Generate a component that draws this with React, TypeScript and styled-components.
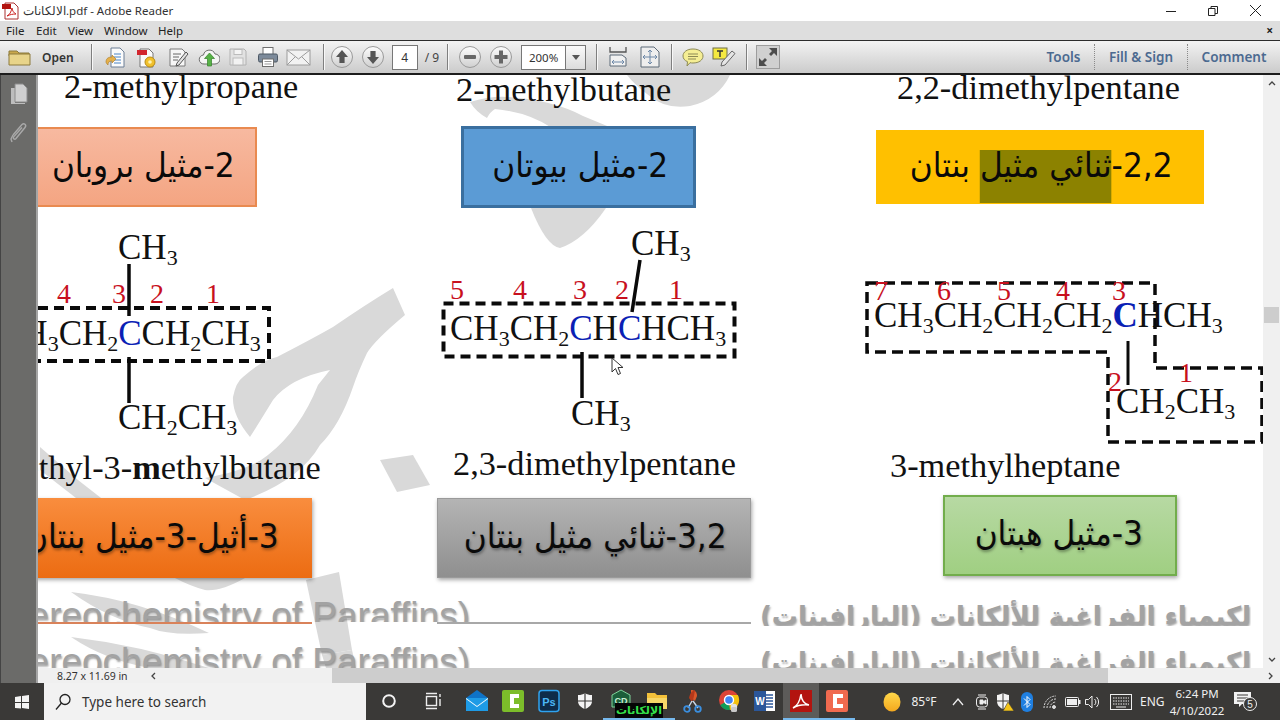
import React from 'react';
import styled, { createGlobalStyle } from 'styled-components';

const PAGE_X = 38;
const PAGE_Y = 75;

const GlobalStyle = createGlobalStyle`
  html, body { margin: 0; padding: 0; height: 100%; overflow: hidden; background: #fff; }
  * { box-sizing: border-box; }
`;

const Win = styled.div`
  width: 1280px;
  height: 720px;
  display: flex;
  flex-direction: column;
  font-family: "Noto Sans", "Liberation Sans", sans-serif;
  overflow: hidden;
`;

const TitleBar = styled.div`
  height: 21px;
  background: #fff;
  display: flex;
  align-items: center;
  padding-left: 2px;
  font-size: 11.5px;
  color: #333;
`;
const TitleText = styled.span`
  margin-left: 3px;
  white-space: nowrap;
`;
const WinControls = styled.div`
  margin-left: auto;
  margin-right: 4px;
  display: flex;
`;
const WinBtn = styled.div`
  width: 42px;
  height: 21px;
  display: flex;
  align-items: center;
  justify-content: center;
`;

const MenuBar = styled.div`
  height: 20px;
  background: #dedede;
  border-bottom: 1px solid #2c2c2c;
  display: flex;
  align-items: center;
  padding: 0 6px;
  gap: 11px;
  font-size: 11.5px;
  color: #222;
`;
const MenuItem = styled.span<{ $w?: number }>`
  width: ${p => p.$w}px;
`;
const MenuClose = styled.span`
  margin-left: auto;
  font-size: 12px;
  font-weight: 700;
  margin-right: 1px;
`;

const ToolBar = styled.div`
  height: 34px;
  background: linear-gradient(#f3f3f3, #cbcbcb);
  border-bottom: 2px solid #1d1d1d;
  display: flex;
  align-items: center;
  padding-left: 8px;
`;
const OpenLabel = styled.span`
  font-size: 12px;
  font-weight: 600;
  color: #333;
  margin-left: 10px;
  margin-right: 17px;
`;
const Sep = styled.div<{ $l?: number; $r?: number }>`
  width: 1px;
  height: 26px;
  background: #7f7f7f;
  box-shadow: 1px 0 0 #f8f8f8;
  margin-left: ${p => p.$l ?? 0}px;
  margin-right: ${p => p.$r ?? 0}px;
`;
const Tool = styled.div<{ $w?: number }>`
  width: ${p => p.$w ?? 30}px;
  height: 30px;
  display: flex;
  align-items: center;
  justify-content: center;
  flex: none;
`;
const PageInput = styled.div`
  width: 26px;
  height: 25px;
  background: #fff;
  border: 1px solid #777;
  font-size: 12px;
  color: #333;
  display: flex;
  align-items: center;
  justify-content: center;
  margin-left: 3px;
`;
const PageTotal = styled.span`
  font-size: 12px;
  color: #444;
  margin: 0 8px 0 7px;
  white-space: nowrap;
`;
const ZoomInput = styled.div`
  width: 45px;
  height: 25px;
  background: #fff;
  border: 1px solid #777;
  font-size: 11.5px;
  color: #333;
  display: flex;
  align-items: center;
  justify-content: center;
  margin-left: 5px;
`;
const ZoomDrop = styled.div`
  width: 20px;
  height: 25px;
  background: linear-gradient(#fafafa, #dcdcdc);
  border: 1px solid #777;
  border-left: 0;
  display: flex;
  align-items: center;
  justify-content: center;
  margin-right: 10px;
`;
const PaneTabs = styled.div`
  margin-left: auto;
  display: flex;
  align-items: center;
  height: 100%;
`;
const PaneTab = styled.div<{ $w: number; $line?: boolean }>`
  width: ${p => p.$w}px;
  height: 26px;
  font-size: 13.5px;
  font-weight: 600;
  color: #4c6a90;
  display: flex;
  align-items: center;
  justify-content: center;
  white-space: nowrap;
  border-right: ${p => (p.$line ? '1px dotted #8a8a8a' : '0')};
`;

const Main = styled.div`
  flex: 1;
  display: flex;
  min-height: 0;
`;
const NavPane = styled.div`
  width: 38px;
  background: #6b6b69;
  border-right: 2px solid #a5a5a5;
  border-left: 1px solid #444;
  display: flex;
  flex-direction: column;
  align-items: center;
  padding-top: 8px;
  gap: 16px;
`;
const DocColumn = styled.div`
  flex: 1;
  display: flex;
  flex-direction: column;
  min-width: 0;
`;
const DocRow = styled.div`
  flex: 1;
  display: flex;
  min-height: 0;
`;
const PageCanvas = styled.div`
  position: relative;
  flex: 1;
  overflow: hidden;
  background: #fff;
`;
const VScroll = styled.div`
  width: 17px;
  background: #f0f0f0;
  display: flex;
  flex-direction: column;
  align-items: center;
  justify-content: space-between;
  padding: 4px 0;
  position: relative;
`;
const VThumb = styled.div`
  position: absolute;
  left: 1px;
  top: 232px;
  width: 15px;
  height: 16px;
  background: #cdcdcd;
`;
const StatusBar = styled.div`
  height: 15px;
  display: flex;
  align-items: center;
  background: #f0f0f0;
  font-size: 10.5px;
  color: #333;
`;
const PageSize = styled.div`
  width: 106px;
  padding-left: 19px;
  white-space: nowrap;
  flex: none;
`;
const HArrow = styled.div`
  width: 20px;
  height: 15px;
  display: flex;
  align-items: center;
  justify-content: center;
  flex: none;
`;
const HTrack = styled.div`
  flex: 1;
  height: 15px;
  display: flex;
`;
const HThumb = styled.div`
  margin-left: 168px;
  width: 776px;
  height: 15px;
  background: #cdcdcd;
`;

const TaskBar = styled.div`
  height: 37px;
  background: #3a3937;
  display: flex;
  align-items: center;
  position: relative;
  color: #f0f0f0;
  font-size: 12px;
`;
const StartBtn = styled.div`
  width: 44px;
  height: 37px;
  flex: none;
  display: flex;
  align-items: center;
  justify-content: center;
`;
const SearchBox = styled.div`
  width: 322px;
  height: 37px;
  flex: none;
  background: #f2f2f2;
  display: flex;
  align-items: center;
  padding-left: 11px;
  gap: 11px;
  font-size: 13.5px;
  color: #333;
`;
const TaskSlot = styled.div<{ $w?: number; $active?: boolean; $open?: boolean }>`
  position: relative;
  width: ${p => p.$w ?? 36}px;
  height: 37px;
  display: flex;
  align-items: center;
  justify-content: center;
  flex: none;
  background: ${p => (p.$active ? '#5c5b59' : 'transparent')};
  border-bottom: 2px solid ${p => (p.$active || p.$open ? '#76b9ed' : 'transparent')};
`;
const RunLabel = styled.div`
  position: absolute;
  left: 615px;
  top: 20px;
  width: 48px;
  height: 15px;
  background: #050505;
  color: #35e04a;
  font-size: 11px;
  font-weight: 700;
  line-height: 15px;
  text-align: center;
  white-space: nowrap;
  font-family: "DejaVu Sans", sans-serif;
`;
const Tray = styled.div`
  margin-left: 27px;
  display: flex;
  align-items: center;
  height: 37px;
  flex: none;
`;
const TrayText = styled.span<{ $w: number }>`
  width: ${p => p.$w}px;
  text-align: center;
  white-space: nowrap;
  font-size: 12px;
  flex: none;
`;
const TrayIcon = styled.div<{ $w?: number }>`
  width: ${p => p.$w ?? 23}px;
  display: flex;
  align-items: center;
  justify-content: center;
  flex: none;
`;
const Clock = styled.div`
  width: 66px;
  flex: none;
  text-align: center;
  font-size: 11.5px;
  line-height: 17px;
`;
const NotifyIcon = styled.div`
  margin-left: 1px;
  position: relative;
  display: flex;
`;

/* page content: a PDF page is a free canvas, things sit where the author dropped them */
const Layer = styled.svg`
  position: absolute;
  left: 0;
  top: 0;
  width: 1225px;
  height: 593px;
`;
const serif = `"Liberation Serif", "Times New Roman", serif`;
const Heading = styled.div<{ $x: number; $y: number }>`
  position: absolute;
  left: ${p => p.$x - PAGE_X}px;
  top: ${p => p.$y - PAGE_Y - 13}px;
  font-family: ${serif};
  font-size: 34.3px;
  line-height: 24px;
  color: #111;
  white-space: nowrap;
`;
const Formula = styled.div<{ $x: number; $y: number }>`
  position: absolute;
  left: ${p => p.$x - PAGE_X}px;
  top: ${p => p.$y - PAGE_Y - 20}px;
  font-family: ${serif};
  font-size: 35px;
  line-height: 40px;
  color: #111;
  white-space: nowrap;
  sub {
    font-size: 22px;
    line-height: 0;
    vertical-align: -6px;
  }
`;
const BlueC = styled.span<{ $bold?: boolean }>`
  color: #0b1fb5;
  font-weight: ${p => (p.$bold ? 700 : 400)};
`;
const Num = styled.div<{ $x: number; $y: number }>`
  position: absolute;
  left: ${p => p.$x - PAGE_X}px;
  top: ${p => p.$y - PAGE_Y - 15}px;
  font-family: ${serif};
  font-size: 28px;
  line-height: 30px;
  color: #c8101e;
`;
const NameBox = styled.div<{
  $x: number; $y: number; $w: number; $h: number; $bg: string; $border: string; $pad: number; $shadow?: boolean;
}>`
  position: absolute;
  left: ${p => p.$x - PAGE_X}px;
  top: ${p => p.$y - PAGE_Y}px;
  width: ${p => p.$w}px;
  height: ${p => p.$h}px;
  background: ${p => p.$bg};
  border: ${p => p.$border};
  box-shadow: ${p => (p.$shadow ? '1px 2px 4px rgba(0,0,0,.35)' : 'none')};
  display: flex;
  align-items: center;
  justify-content: flex-start;
  padding-right: ${p => p.$pad}px;
  padding-bottom: 5px;
  direction: rtl;
  overflow: hidden;
  font-family: "DejaVu Sans", "Liberation Sans", sans-serif;
  font-size: 34px;
  color: #0a0a0a;
  white-space: nowrap;
  text-shadow: ${p => (p.$shadow ? '1px 2px 3px rgba(0,0,0,.35)' : 'none')};
`;
/* DejaVu is the only installed Arabic face and runs wider than the Arial of the original */
const NameText = styled.span`
  flex: none;
  display: inline-block;
  transform: scaleX(0.92);
  transform-origin: right center;
`;
const Marked = styled.span`
  background: linear-gradient(transparent 5px, #8c8200 5px);
  padding-bottom: 18px;
`;
const Strip = styled.div<{ $x: number; $y: number; $w: number; $h: number; $rtl?: boolean }>`
  position: absolute;
  left: ${p => p.$x - PAGE_X}px;
  top: ${p => p.$y - PAGE_Y}px;
  width: ${p => p.$w}px;
  height: ${p => p.$h}px;
  overflow: hidden;
  display: flex;
  justify-content: ${p => (p.$rtl ? 'flex-start' : 'flex-end')};
  direction: ${p => (p.$rtl ? 'rtl' : 'ltr')};
  white-space: nowrap;
  font-family: ${p => (p.$rtl ? '"DejaVu Sans", sans-serif' : '"Liberation Sans", sans-serif')};
  font-size: ${p => (p.$rtl ? 26 : 37)}px;
  font-weight: ${p => (p.$rtl ? 700 : 400)};
  line-height: 40px;
  color: #a3a3a3;
  text-shadow: 1px 2px 2px rgba(90, 90, 90, .55);
`;
const Rule = styled.div<{ $x: number; $w: number; $c: string }>`
  position: absolute;
  left: ${p => p.$x - PAGE_X}px;
  top: ${622 - PAGE_Y}px;
  width: ${p => p.$w}px;
  height: 2px;
  background: ${p => p.$c};
`;
const Cursor = styled.svg`
  position: absolute;
  left: ${611 - PAGE_X}px;
  top: ${357 - PAGE_Y}px;
`;

const Svg: React.FC<{ s?: number; w?: number; h?: number; children: React.ReactNode }> = ({ s = 22, w, h, children }) => (
  <svg width={w ?? s} height={h ?? s} viewBox={`0 0 ${w ?? s} ${h ?? s}`} style={{ display: 'block' }}>
    {children}
  </svg>
);

const CircleBtn: React.FC<{ kind: 'up' | 'down' | 'minus' | 'plus' }> = ({ kind }) => (
  <Svg s={24}>
    <defs>
      <linearGradient id="cb" x1="0" y1="0" x2="0" y2="1">
        <stop offset="0" stopColor="#fdfdfd" />
        <stop offset="1" stopColor="#cfcfcf" />
      </linearGradient>
    </defs>
    <circle cx="12" cy="12" r="10.5" fill="url(#cb)" stroke="#9a9a9a" />
    {kind === 'up' && <path d="M12 5l6 7h-3.4v6H9.4v-6H6z" fill="#555" />}
    {kind === 'down' && <path d="M12 19l-6-7h3.4V6h5.2v6H18z" fill="#555" />}
    {kind === 'minus' && <rect x="6" y="10" width="12" height="4" rx="1" fill="#666" />}
    {kind === 'plus' && <path d="M10 5.5h4V10h4.5v4H14v4.5h-4V14H5.5v-4H10z" fill="#666" />}
  </Svg>
);

const DocBase: React.FC = () => (
  <path d="M6 2h9l4 4v15H6z" fill="#fbfbfb" stroke="#6d7f96" />
);

const ToolIcons = {
  folder: (
    <Svg s={24}>
      <path d="M1 6h8l2 2h10v3H1z" fill="#c9a84c" stroke="#8d7a3c" />
      <path d="M1 20V9h21v11z" fill="#e8d48a" stroke="#8d7a3c" />
    </Svg>
  ),
  create: (
    <Svg>
      <DocBase />
      <path d="M9 8h7M9 11h7M9 14h7M9 17h7" stroke="#4a84c4" />
      <path d="M1 16c0-4 3-5 6-5v-2l4 4-4 4v-2c-3 0-4 1-4 4-1-1-2-2-2-3z" fill="#e5b04a" stroke="#a97b26" strokeWidth=".6" />
    </Svg>
  ),
  combine: (
    <Svg>
      <path d="M5 3h9l4 4v14H5z" fill="#fafafa" stroke="#777" />
      <rect x="2" y="4" width="10" height="5" fill="#d2262e" />
      <circle cx="15" cy="16" r="5" fill="#f0c02c" stroke="#b98b12" />
      <circle cx="15" cy="16" r="1.8" fill="#fff2b0" />
    </Svg>
  ),
  sign: (
    <Svg>
      <path d="M3 3h12l3 3v14H3z" fill="#f7f7f7" stroke="#7b7b7b" />
      <path d="M6 8h8M6 11h6M6 14h5" stroke="#666" />
      <path d="M10 17l9-11 2 2-9 11-3 1z" fill="#e3e3e3" stroke="#555" />
    </Svg>
  ),
  cloud: (
    <Svg>
      <path d="M6 18a4.500 4.500 0 0 1-.5-9A6 6 0 0 1 17 8a5 5 0 0 1 0 10z" fill="#f5f5f5" stroke="#6f6f6f" />
      <path d="M11.500 7l5 5.500h-3V20h-4v-7.500h-3z" fill="#57b247" stroke="#33802a" strokeWidth=".7" />
    </Svg>
  ),
  save: (
    <Svg>
      <path d="M3 3h14l2 2v14H3z" fill="#e2e2e2" stroke="#b2b2b2" />
      <rect x="7" y="3.500" width="8" height="5" fill="#f4f4f4" stroke="#bbb" />
      <rect x="6" y="12" width="10" height="7" fill="#f2f2f2" stroke="#bbb" />
    </Svg>
  ),
  print: (
    <Svg>
      <rect x="6" y="1.500" width="10" height="7" fill="#fff" stroke="#6e6e6e" />
      <rect x="1.500" y="8" width="19" height="8" rx="1.500" fill="#7c8a9a" stroke="#4d5865" />
      <rect x="5.500" y="13" width="11" height="7.500" fill="#fff" stroke="#6e6e6e" />
      <path d="M7.500 15.500h7M7.500 18h7" stroke="#999" />
    </Svg>
  ),
  mail: (
    <Svg w={25} h={22}>
      <rect x="1" y="4" width="23" height="15" fill="#f2f2f2" stroke="#9c9c9c" />
      <path d="M1 4l11.500 9L24 4M1 19l8-8M24 19l-8-8" fill="none" stroke="#9c9c9c" />
    </Svg>
  ),
  fitWidth: (
    <Svg>
      <path d="M3 1v5h16V1" fill="none" stroke="#555" strokeWidth="1.300" />
      <path d="M3 9h12l4 3v8H3z" fill="#f1f1f1" stroke="#5d6a78" />
      <path d="M5 16h12M5 16l2-2M5 16l2 2M17 16l-2-2M17 16l-2 2" stroke="#6c88a8" fill="none" />
    </Svg>
  ),
  fitPage: (
    <Svg>
      <path d="M2 1h13l5 5v15H2z" fill="#eee" stroke="#5d6a78" />
      <path d="M11 4v14M4 11h14M11 4l-2 2M11 4l2 2M11 18l-2-2M11 18l2-2M4 11l2-2M4 11l2 2M18 11l-2-2M18 11l-2 2" stroke="#6c88a8" fill="none" />
    </Svg>
  ),
  comment: (
    <Svg w={24} h={22}>
      <path d="M12 3c6 0 10 3 10 7s-4 7-10 7c-1 0-2 0-3-.3L6 20l.5-4.300C3.500 14.500 2 12.500 2 10c0-4 4-7 10-7z" fill="#f5ee94" stroke="#8d8a55" />
      <path d="M7 8h10M7 10.500h10M7 13h8" stroke="#8d8a55" />
    </Svg>
  ),
  highlight: (
    <Svg w={24} h={22}>
      <rect x="1" y="2" width="14" height="11" fill="#f5e941" stroke="#6f6f4a" />
      <path d="M5 5h6M8 5v6" stroke="#333" strokeWidth="1.400" />
      <path d="M9 20l1-4L20 5l3 2.500L13 19z" fill="#e6e6e6" stroke="#666" />
    </Svg>
  ),
  expand: (
    <Svg s={24}>
      <rect x=".5" y=".5" width="23" height="23" fill="#d0d0d0" stroke="#9d9d9d" />
      <path d="M21 3v8l-3-3-3 3-2-2 3-3-3-3zM3 21v-8l3 3 3-3 2 2-3 3 3 3z" fill="#4d4d4d" />
    </Svg>
  ),
};

const TaskIcons = {
  start: (
    <Svg s={16}>
      <path d="M1 3l6-1v6H1zM8 2l7-1v7H8zM1 9h6v5.500L1 14zM8 9h7v6l-7-1z" fill="#f4f4f4" />
    </Svg>
  ),
  search: (
    <svg width="16" height="18" viewBox="0 0 16 18" fill="none" stroke="#222" strokeWidth="1.300">
      <circle cx="10" cy="6.500" r="5" />
      <path d="M6.500 10L1 16.500" />
    </svg>
  ),
  cortana: (
    <Svg s={16}>
      <circle cx="8" cy="8" r="5.800" fill="none" stroke="#f4f4f4" strokeWidth="2" />
    </Svg>
  ),
  taskview: (
    <Svg s={18}>
      <path d="M2 1.500h11M2 16.500h11M16 2v3M16 7v7" stroke="#eee" strokeWidth="1.400" />
      <rect x="2.500" y="4.500" width="10" height="9" fill="none" stroke="#eee" strokeWidth="1.400" />
    </Svg>
  ),
  mail: (
    <Svg s={24}>
      <path d="M12 1l11 8H1z" fill="#0f73c7" />
      <rect x="1" y="9" width="22" height="13" fill="#1e9be6" />
      <path d="M1 9l11 8 11-8v1l-11 8L1 10z" fill="#fff" />
    </Svg>
  ),
  camGreen: (
    <Svg s={24}>
      <rect x="1" y="1" width="22" height="22" rx="2" fill="#7cbd2a" />
      <path d="M9 5h9v4h-5v6h5v4H9z" fill="#fff" />
    </Svg>
  ),
  ps: (
    <svg width="22" height="24" viewBox="0 0 22 24">
      <rect x="1" y="1.500" width="20" height="21" rx="3" fill="#0e2c4a" stroke="#2fa3f0" strokeWidth="1.500" />
      <text x="11" y="16.500" fontSize="11" fontWeight="700" fill="#4bb6f5" textAnchor="middle" fontFamily="Liberation Sans, sans-serif">Ps</text>
    </svg>
  ),
  shield: (
    <Svg s={18}>
      <path d="M9 1c2 1.500 4 2 7 2v6c0 4-3 6.500-7 8-4-1.500-7-4-7-8V3c3 0 5-.5 7-2z" fill="#f4f4f4" />
      <path d="M9 1v16M2 9h14" stroke="#3a3937" strokeWidth="1.200" />
    </Svg>
  ),
  cd: (
    <svg width="24" height="24" viewBox="0 0 24 24">
      <path d="M12 1l9 5v12H3V6z" fill="#1c5e3a" stroke="#7fd39a" />
      <text x="12" y="15" fontSize="9" fontWeight="700" fill="#c8f0d4" textAnchor="middle" fontFamily="Liberation Sans, sans-serif">CD</text>
    </svg>
  ),
  folder: (
    <Svg s={24}>
      <path d="M2 4h8l2 2h10v14H2z" fill="#f3c13a" />
      <rect x="2" y="9" width="20" height="11" fill="#f7d768" />
    </Svg>
  ),
  snip: (
    <Svg s={24}>
      <path d="M10 1c4 0 6 2 6 6l-2 5-4-3z" fill="#d9582b" />
      <path d="M8 9c1-5 3-7 6-8-1 5-1 8-3 12z" fill="#b5381a" />
      <path d="M12 12l5 7M11 12l-4 7" stroke="#c9d5e3" strokeWidth="1.400" />
      <circle cx="6" cy="20" r="2.800" fill="none" stroke="#3a8fe0" strokeWidth="1.800" />
      <circle cx="17" cy="20" r="2.800" fill="none" stroke="#3a8fe0" strokeWidth="1.800" />
    </Svg>
  ),
  chrome: (
    <Svg s={24}>
      <circle cx="12" cy="11" r="10" fill="#db4437" />
      <path d="M12 11L3.300 16A10 10 0 0 0 13 21z" fill="#0f9d58" />
      <path d="M12 6h8.800A10 10 0 0 1 13 21l-1-10z" fill="#f4c20d" />
      <circle cx="12" cy="11" r="4.500" fill="#4285f4" stroke="#fff" strokeWidth="1.400" />
      <circle cx="17" cy="18" r="3.200" fill="#e3e3e3" />
      <rect x="14" y="18" width="6" height="5" rx="1.500" fill="#c9c9c9" />
    </Svg>
  ),
  word: (
    <svg width="22" height="24" viewBox="0 0 22 24">
      <rect x="7" y="2" width="14" height="20" fill="#fff" />
      <path d="M10 6h9M10 9h9M10 12h9M10 15h9M10 18h9" stroke="#2b579a" strokeWidth="1.400" />
      <rect x="0" y="2" width="12" height="20" fill="#2b579a" />
      <text x="6" y="16" fontSize="10" fontWeight="700" fill="#fff" textAnchor="middle" fontFamily="Liberation Sans, sans-serif">W</text>
    </svg>
  ),
  acrobat: (
    <Svg s={24}>
      <rect x="1" y="1" width="22" height="22" fill="#b3140f" />
      <path d="M4 19c4-2 7-7 8-14 .5 7 3 10 8 11-5-.5-11 0-16 3z" fill="none" stroke="#fff" strokeWidth="1.500" />
    </Svg>
  ),
  camRed: (
    <Svg s={24}>
      <rect x="1" y="1" width="22" height="22" rx="2" fill="#f06a4f" />
      <path d="M8 5h10v4h-6v6h6v4H8z" fill="#fff" />
    </Svg>
  ),
  sun: (
    <Svg s={20}>
      <defs>
        <linearGradient id="sun" x1="0" y1="0" x2="0" y2="1">
          <stop offset="0" stopColor="#ffd84a" />
          <stop offset="1" stopColor="#f4a81e" />
        </linearGradient>
      </defs>
      <ellipse cx="10" cy="10" rx="8.500" ry="9.500" fill="url(#sun)" />
    </Svg>
  ),
  caret: (
    <svg width="14" height="10" viewBox="0 0 14 10" fill="none" stroke="#eee" strokeWidth="1.300">
      <path d="M2 8l5-6 5 6" />
    </svg>
  ),
  meet: (
    <svg width="14" height="20" viewBox="0 0 14 20" fill="none" stroke="#eee">
      <path d="M3 3h8M3 17h8" />
      <rect x="1.500" y="5" width="11" height="10" rx="3" />
      <path d="M5 8h3v4H5zM8 10l3-2v4z" fill="#eee" />
    </svg>
  ),
  defender: (
    <Svg s={20}>
      <path d="M8 1c2 1 4 1.800 6 2v6c0 4-2.500 6.500-6 8-3.500-1.500-6-4-6-8V3c2-.2 4-1 6-2z" fill="#f4f4f4" />
      <path d="M8 1v16M2 9h12" stroke="#3a3937" />
      <path d="M13 10l6 9H8z" fill="#f5c518" stroke="#3a3937" strokeWidth=".6" />
    </Svg>
  ),
  bluetooth: (
    <svg width="12" height="20" viewBox="0 0 12 20">
      <rect width="12" height="20" rx="6" fill="#1f7fe0" />
      <path d="M3 6.500l6 6-3 3v-11l3 3-6 6" fill="none" stroke="#fff" />
    </svg>
  ),
  wifi: (
    <svg width="16" height="16" viewBox="0 0 16 16" fill="none" stroke="#ddd">
      <path d="M2 14a12 12 0 0 1 12-12M5 14a9 9 0 0 1 9-9M8 14a6 6 0 0 1 6-6" strokeDasharray="2 1" />
      <circle cx="12" cy="13" r="1.500" fill="#ddd" />
    </svg>
  ),
  battery: (
    <svg width="16" height="12" viewBox="0 0 16 12">
      <rect x=".5" y="1.500" width="13" height="9" rx="1" fill="none" stroke="#eee" />
      <rect x="2" y="3" width="10" height="6" fill="#eee" />
      <rect x="14" y="4" width="1.500" height="4" fill="#eee" />
    </svg>
  ),
  speaker: (
    <svg width="18" height="16" viewBox="0 0 18 16" fill="none" stroke="#eee">
      <path d="M1.500 5.500h3L8 2v12l-3.500-3.500h-3z" />
      <path d="M10.500 5a4 4 0 0 1 0 6M12.500 3a7 7 0 0 1 0 10" />
    </svg>
  ),
  keyboard: (
    <svg width="22" height="16" viewBox="0 0 22 16" fill="none" stroke="#eee">
      <rect x=".5" y=".5" width="21" height="15" />
      <path d="M3 4h16M3 7h16M3 10h16" strokeDasharray="1.500 1" />
      <path d="M6 13h10" />
    </svg>
  ),
  notify: (
    <svg width="30" height="26" viewBox="0 0 30 26">
      <path d="M3 3h17v12h-9l-3 3v-3H3z" fill="#f2f2f2" />
      <path d="M6 6h11M6 9h11M6 12h8" stroke="#3a3937" />
      <circle cx="19" cy="15" r="6.500" fill="#3a3937" stroke="#eee" />
      <text x="19" y="18.500" fontSize="10" fill="#eee" textAnchor="middle" fontFamily="Liberation Sans, sans-serif">5</text>
    </svg>
  ),
};

const Chevron: React.FC<{ dir: 'up' | 'down' | 'left' | 'right' }> = ({ dir }) => {
  const d = { up: 'M2 6l3-3 3 3', down: 'M2 4l3 3 3-3', left: 'M6 2L3 5l3 3', right: 'M4 2l3 3-3 3' }[dir];
  return (
    <svg width="10" height="10" viewBox="0 0 10 10" fill="none" stroke="#444" strokeWidth="1.300" style={{ display: 'block' }}>
      <path d={d} />
    </svg>
  );
};

const Watermark: React.FC = () => (
  <Layer viewBox={`${PAGE_X} ${PAGE_Y} 1225 593`}>
    <g fill="#d9d9d9">
      <path d="M627 75H730Q718 100 690 106Q665 110 647 94Q634 84 627 75Z" />
      <path d="M470 102Q490 96 507 97Q553 100 583 116L612 128H552Q528 112 495 109Q490 112 487 118Q476 112 470 102Z" />
      <path d="M531 208H606Q584 240 560 248Q546 246 531 208Z" />
      <path d="M393 288L405 315Q375 340 367 353Q358 372 353 387Q340 425 320 445Q300 480 245 500L205 478Q250 470 268 455Q300 430 318 385Q330 370 330 370Q290 378 273 400Q262 418 250 437Q232 415 233 397Q236 382 243 377Q262 360 277 357Q310 340 333 327Q365 305 393 288Z" />
      <path d="M380 460L413 455L430 485L397 492Z" />
      <path d="M40 447L78 480L110 505L85 505L40 470Z" />
      <path d="M175 578H245Q220 592 205 590Q190 586 175 578Z" />
      <path d="M306 580L339 572L352 650L322 655Z" />
      <path d="M71 592Q140 600 209 633Q170 636 150 628Q110 620 71 592Z" />
      <path d="M71 637Q140 645 209 668H150Q105 660 71 637Z" />
      <path d="M322 655L352 650L356 668H326Z" />
    </g>
  </Layer>
);

const Bonds: React.FC = () => (
  <Layer viewBox={`${PAGE_X} ${PAGE_Y} 1225 593`}>
    <g fill="none" stroke="#0a0a0a">
      <path d="M38 308H269V361H38" strokeWidth="4" strokeDasharray="10 6" />
      <path d="M129 264V316M129 357V403" strokeWidth="3.500" />
      <rect x="443.500" y="303.500" width="291" height="53" strokeWidth="4" strokeDasharray="10 6" />
      <path d="M640 260L632 312M582 352V398" strokeWidth="3.500" />
      <path d="M867 283H1155V368H1262V442H1108V352H867Z" strokeWidth="3.500" strokeDasharray="11 6" />
      <path d="M1128 341V385" strokeWidth="3" />
    </g>
  </Layer>
);

const App: React.FC = () => (
  <Win>
    <GlobalStyle />
    <TitleBar>
      <svg width="18" height="18" viewBox="0 0 18 18" style={{ display: 'block' }}>
        <path d="M3 1h9l4 4v12H3z" fill="#fff" stroke="#a33" />
        <rect x="0" y="2" width="9" height="5" fill="#b3140f" />
        <path d="M5 14c3-1.500 4-4 5-8 .3 3 2 5 4 6-3 0-6 .5-9 2z" fill="none" stroke="#c22" />
      </svg>
      <TitleText>الالكانات.pdf - Adobe Reader</TitleText>
      <WinControls>
        <WinBtn>
          <svg width="12" height="12" stroke="#222"><path d="M1 6.500h10" /></svg>
        </WinBtn>
        <WinBtn>
          <svg width="12" height="12" fill="none" stroke="#222"><path d="M1.500 3.500h6.500v7H1.500zM4 3.500V1.500h6.500v7H8" /></svg>
        </WinBtn>
        <WinBtn>
          <svg width="13" height="13" stroke="#222"><path d="M1 1l11 11M12 1L1 12" /></svg>
        </WinBtn>
      </WinControls>
    </TitleBar>
    <MenuBar>
      <MenuItem $w={19}>File</MenuItem>
      <MenuItem $w={21}>Edit</MenuItem>
      <MenuItem $w={25}>View</MenuItem>
      <MenuItem $w={43}>Window</MenuItem>
      <MenuItem $w={26}>Help</MenuItem>
      <MenuClose>×</MenuClose>
    </MenuBar>
    <ToolBar>
      {ToolIcons.folder}
      <OpenLabel>Open</OpenLabel>
      <Sep $r={9} />
      <Tool>{ToolIcons.create}</Tool>
      <Tool>{ToolIcons.combine}</Tool>
      <Tool $w={34}>{ToolIcons.sign}</Tool>
      <Tool $w={28}>{ToolIcons.cloud}</Tool>
      <Tool>{ToolIcons.save}</Tool>
      <Tool>{ToolIcons.print}</Tool>
      <Tool $w={32}>{ToolIcons.mail}</Tool>
      <Sep $l={8} $r={3} />
      <Tool $w={31}><CircleBtn kind="up" /></Tool>
      <Tool $w={31}><CircleBtn kind="down" /></Tool>
      <PageInput>4</PageInput>
      <PageTotal>/ 9</PageTotal>
      <Sep $r={6} />
      <Tool $w={31}><CircleBtn kind="minus" /></Tool>
      <Tool $w={31}><CircleBtn kind="plus" /></Tool>
      <ZoomInput>200%</ZoomInput>
      <ZoomDrop>
        <svg width="8" height="5"><path d="M0 0h8L4 5z" fill="#555" /></svg>
      </ZoomDrop>
      <Sep $r={6} />
      <Tool>{ToolIcons.fitWidth}</Tool>
      <Tool $w={34}>{ToolIcons.fitPage}</Tool>
      <Sep $l={4} $r={6} />
      <Tool>{ToolIcons.comment}</Tool>
      <Tool $w={32}>{ToolIcons.highlight}</Tool>
      <Sep $l={6} $r={6} />
      <Tool $w={30}>{ToolIcons.expand}</Tool>
      <PaneTabs>
        <PaneTab $w={62} $line>Tools</PaneTab>
        <PaneTab $w={93} $line>Fill &amp; Sign</PaneTab>
        <PaneTab $w={92}>Comment</PaneTab>
      </PaneTabs>
    </ToolBar>
    <Main>
      <NavPane>
        <svg width="20" height="22" viewBox="0 0 20 22">
          <path d="M2 5h4v15h10v1H2z" fill="#bdbdbd" />
          <path d="M6 1h8l4 4v14H6z" fill="#cfcfcf" stroke="#8c8c8c" />
        </svg>
        <svg width="20" height="24" viewBox="0 0 20 24" fill="none" stroke="#a9a9a9" strokeWidth="1.400">
          <path d="M4 14L13 3.500c2-2 5 .5 3 3L7 17.500c-1.300 1.500-3.500 0-2.300-1.600L13 6.500" />
          <path d="M3 21l-1-3 2-4" />
        </svg>
      </NavPane>
      <DocColumn>
        <DocRow>
          <PageCanvas>
            <Watermark />

            <Heading $x={64} $y={87}>2-methylpropane</Heading>
            <Heading $x={456} $y={90}>2-methylbutane</Heading>
            <Heading $x={897} $y={88}>2,2-dimethylpentane</Heading>

            <NameBox $x={30} $y={127} $w={227} $h={80} $pad={20} $bg="linear-gradient(#f7b9a0, #f4a582)" $border="2px solid #e98a50">
              <NameText>2-مثيل بروبان</NameText>
            </NameBox>
            <NameBox $x={461} $y={126} $w={235} $h={82} $pad={25} $bg="#5b9bd5" $border="3px solid #3a6f9f">
              <NameText>2-مثيل بيوتان</NameText>
            </NameBox>
            <NameBox $x={876} $y={130} $w={328} $h={74} $pad={31} $bg="#ffc000" $border="0">
              <NameText>2,2-<Marked>ثنائي مثيل</Marked> بنتان</NameText>
            </NameBox>

            <Bonds />

            <Formula $x={118} $y={248}>CH<sub>3</sub></Formula>
            <Formula $x={-1} $y={334}>CH<sub>3</sub>CH<sub>2</sub><BlueC>C</BlueC>CH<sub>2</sub>CH<sub>3</sub></Formula>
            <Formula $x={118} $y={418}>CH<sub>2</sub>CH<sub>3</sub></Formula>
            <Num $x={57} $y={294}>4</Num>
            <Num $x={112} $y={294}>3</Num>
            <Num $x={150} $y={294}>2</Num>
            <Num $x={206} $y={294}>1</Num>

            <Formula $x={631} $y={244}>CH<sub>3</sub></Formula>
            <Formula $x={450} $y={329}>CH<sub>3</sub>CH<sub>2</sub><BlueC>C</BlueC>H<BlueC>C</BlueC>HCH<sub>3</sub></Formula>
            <Formula $x={571} $y={414}>CH<sub>3</sub></Formula>
            <Num $x={450} $y={290}>5</Num>
            <Num $x={513} $y={290}>4</Num>
            <Num $x={573} $y={290}>3</Num>
            <Num $x={615} $y={290}>2</Num>
            <Num $x={669} $y={290}>1</Num>

            <Formula $x={874} $y={316}>CH<sub>3</sub>CH<sub>2</sub>CH<sub>2</sub>CH<sub>2</sub><BlueC $bold>C</BlueC>HCH<sub>3</sub></Formula>
            <Formula $x={1116} $y={402}>CH<sub>2</sub>CH<sub>3</sub></Formula>
            <Num $x={874} $y={291}>7</Num>
            <Num $x={937} $y={291}>6</Num>
            <Num $x={997} $y={291}>5</Num>
            <Num $x={1056} $y={291}>4</Num>
            <Num $x={1112} $y={291}>3</Num>
            <Num $x={1108} $y={382}>2</Num>
            <Num $x={1179} $y={373}>1</Num>

            <Heading $x={-5} $y={468}>3-ethyl-3-<b>m</b>ethylbutane</Heading>
            <Heading $x={453} $y={464}>2,3-dimethylpentane</Heading>
            <Heading $x={890} $y={466}>3-methylheptane</Heading>

            <NameBox $x={30} $y={498} $w={282} $h={80} $pad={33} $shadow $bg="linear-gradient(#f98d3e, #ec6c12)" $border="0">
              <NameText>3-أثيل-3-مثيل بنتان</NameText>
            </NameBox>
            <NameBox $x={437} $y={498} $w={314} $h={80} $pad={23} $shadow $bg="linear-gradient(#b4b4b4, #8f8f8f)" $border="1px solid #9a9a9a">
              <NameText>3,2-ثنائي مثيل بنتان</NameText>
            </NameBox>
            <NameBox $x={943} $y={495} $w={234} $h={81} $pad={32} $shadow $bg="linear-gradient(#b7d9a3, #a0cf82)" $border="2px solid #72ad4c">
              <NameText>3-مثيل هبتان</NameText>
            </NameBox>

            <Strip $x={38} $y={596} $w={432} $h={26}>Stereochemistry of Paraffins)</Strip>
            <Strip $x={38} $y={642} $w={432} $h={26}>Stereochemistry of Paraffins)</Strip>
            <Strip $x={745} $y={596} $w={506} $h={30} $rtl>لكيمياء الفراغية للألكانات (البارافينات)</Strip>
            <Strip $x={745} $y={642} $w={506} $h={26} $rtl>لكيمياء الفراغية للألكانات (البارافينات)</Strip>
            <Rule $x={38} $w={274} $c="#d9825a" />
            <Rule $x={437} $w={314} $c="#a8a8a8" />

            <Cursor width="13" height="20" viewBox="0 0 13 20">
              <path d="M1 1v14l3.500-3.500 2.500 6 2.500-1-2.500-6H12z" fill="#fff" stroke="#333" />
            </Cursor>
          </PageCanvas>
          <VScroll>
            <Chevron dir="up" />
            <VThumb />
            <Chevron dir="down" />
          </VScroll>
        </DocRow>
        <StatusBar>
          <PageSize>8.27 x 11.69 in</PageSize>
          <HArrow><Chevron dir="left" /></HArrow>
          <HTrack><HThumb /></HTrack>
          <HArrow><Chevron dir="right" /></HArrow>
        </StatusBar>
      </DocColumn>
    </Main>
    <TaskBar>
      <StartBtn>{TaskIcons.start}</StartBtn>
      <SearchBox>
        {TaskIcons.search}
        <span>Type here to search</span>
      </SearchBox>
      <TaskSlot $w={45}>{TaskIcons.cortana}</TaskSlot>
      <TaskSlot $w={44}>{TaskIcons.taskview}</TaskSlot>
      <TaskSlot $w={4} />
      <TaskSlot>{TaskIcons.mail}</TaskSlot>
      <TaskSlot>{TaskIcons.camGreen}</TaskSlot>
      <TaskSlot>{TaskIcons.ps}</TaskSlot>
      <TaskSlot>{TaskIcons.shield}</TaskSlot>
      <TaskSlot $open>{TaskIcons.cd}</TaskSlot>
      <TaskSlot $open>{TaskIcons.folder}</TaskSlot>
      <TaskSlot>{TaskIcons.snip}</TaskSlot>
      <TaskSlot>{TaskIcons.chrome}</TaskSlot>
      <TaskSlot>{TaskIcons.word}</TaskSlot>
      <TaskSlot $active>{TaskIcons.acrobat}</TaskSlot>
      <TaskSlot $open>{TaskIcons.camRed}</TaskSlot>
      <Tray>
        <TrayIcon $w={20}>{TaskIcons.sun}</TrayIcon>
        <TrayText $w={44}>85°F</TrayText>
        <TrayIcon $w={24}>{TaskIcons.caret}</TrayIcon>
        <TrayIcon $w={24}>{TaskIcons.meet}</TrayIcon>
        <TrayIcon $w={21}>{TaskIcons.defender}</TrayIcon>
        <TrayIcon>{TaskIcons.bluetooth}</TrayIcon>
        <TrayIcon>{TaskIcons.wifi}</TrayIcon>
        <TrayIcon>{TaskIcons.battery}</TrayIcon>
        <TrayIcon $w={18}>{TaskIcons.speaker}</TrayIcon>
        <TrayIcon $w={38}>{TaskIcons.keyboard}</TrayIcon>
        <TrayText $w={24}>ENG</TrayText>
        <Clock>
          6:24 PM
          <br />
          4/10/2022
        </Clock>
        <NotifyIcon>{TaskIcons.notify}</NotifyIcon>
      </Tray>
      <RunLabel>الإلكانات</RunLabel>
    </TaskBar>
  </Win>
);

export default App;
